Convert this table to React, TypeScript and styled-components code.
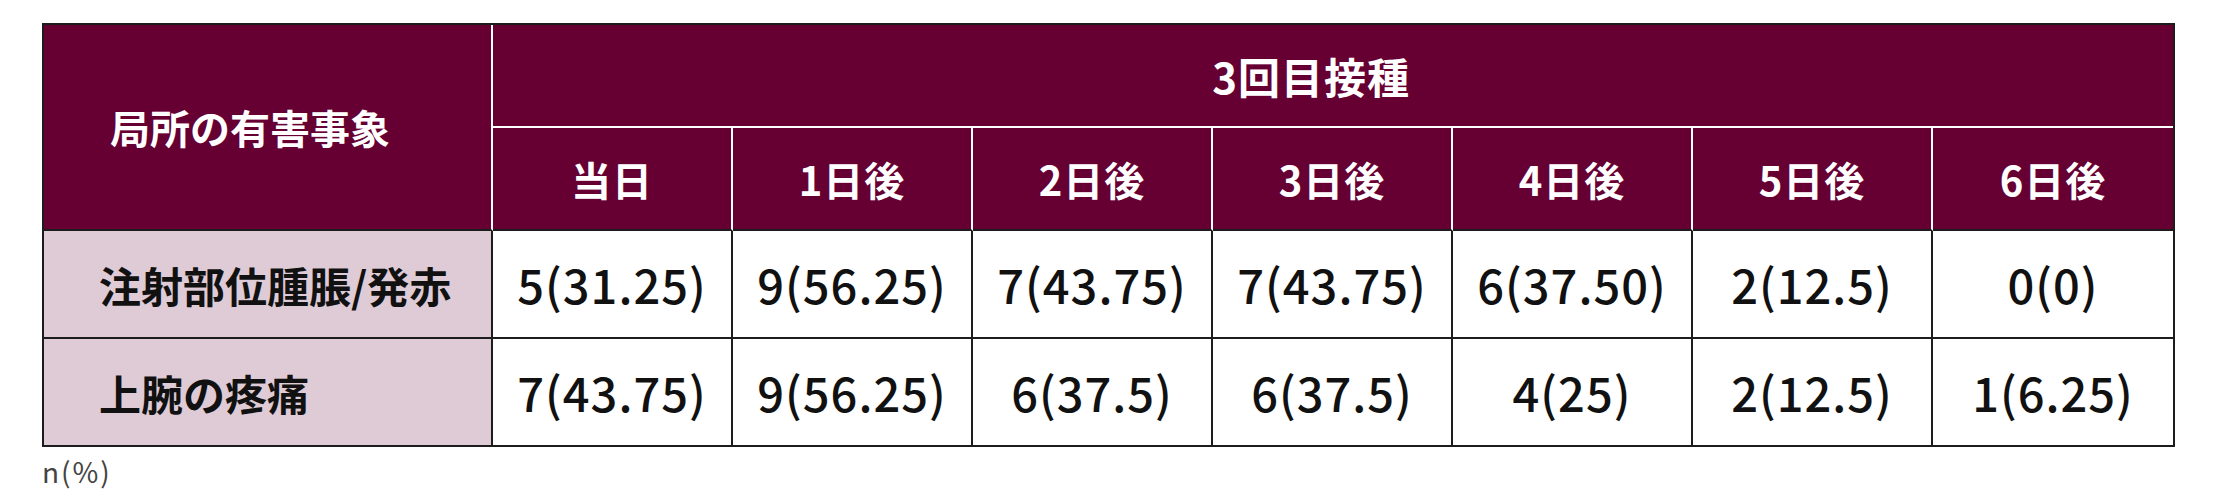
import React from 'react';
import styled, { createGlobalStyle } from 'styled-components';

const GlobalStyle = createGlobalStyle`
  body {
    margin: 0;
    background: #fff;
    font-family: "Noto Sans CJK JP", "Noto Sans", sans-serif;
  }
`;

const Page = styled.div`
  padding: 23px 0 0 42px;
`;

const Table = styled.table`
  width: 2131px;
  table-layout: fixed;
  border-collapse: separate;
  border-spacing: 0;
  border: 2px solid #1c1c1c;
`;

const HeadCell = styled.th<{ $first?: boolean; $bottom?: boolean; $size?: number }>`
  background: #660033;
  color: #fff;
  font-weight: 700;
  font-size: ${(p) => p.$size || 40}px;
  letter-spacing: ${(p) => (p.$first ? '0' : '1px')};
  height: ${(p) => (p.$first ? '204px' : '101px')};
  padding: ${(p) => (p.$first ? '0 0 0 66px' : '0')};
  text-align: ${(p) => (p.$first ? 'left' : 'center')};
  border-right: 2px solid #fff;
  border-bottom: 2px solid ${(p) => (p.$bottom ? '#1c1c1c' : '#fff')};
  &:last-child {
    border-right: none;
  }
`;

const SpanTitle = styled.span`
  display: inline-block;
  margin-right: 44px;
`;

const LabelCell = styled.td`
  background: #decbd6;
  color: #111;
  font-weight: 700;
  font-size: 42px;
  height: 104px;
  padding-left: 55px;
  border-right: 2px solid #1c1c1c;
  border-bottom: 2px solid #1c1c1c;
  tr:last-child > & {
    border-bottom: none;
  }
`;

const ValueCell = styled.td`
  background: #fff;
  color: #111;
  font-weight: 500;
  font-size: 47px;
  letter-spacing: 1px;
  text-align: center;
  padding-bottom: 2px;
  border-right: 2px solid #1c1c1c;
  border-bottom: 2px solid #1c1c1c;
  &:last-child {
    border-right: none;
  }
  tr:last-child > & {
    border-bottom: none;
  }
`;

const Note = styled.div`
  margin-top: 4px;
  font-size: 28px;
  letter-spacing: 2px;
  color: #444;
`;

const days = ['当日', '1日後', '2日後', '3日後', '4日後', '5日後', '6日後'];

const rows = [
  {
    label: '注射部位腫脹/発赤',
    values: ['5(31.25)', '9(56.25)', '7(43.75)', '7(43.75)', '6(37.50)', '2(12.5)', '0(0)'],
  },
  {
    label: '上腕の疼痛',
    values: ['7(43.75)', '9(56.25)', '6(37.5)', '6(37.5)', '4(25)', '2(12.5)', '1(6.25)'],
  },
];

const App: React.FC = () => {
  return (
    <Page>
      <GlobalStyle />
      <Table>
        <colgroup>
          <col style={{ width: 449 }} />
          {days.map((d) => (
            <col key={d} style={{ width: 240 }} />
          ))}
        </colgroup>
        <thead>
          <tr>
            <HeadCell $first $bottom rowSpan={2}>
              局所の有害事象
            </HeadCell>
            <HeadCell colSpan={7} $size={42}>
              <SpanTitle>3回目接種</SpanTitle>
            </HeadCell>
          </tr>
          <tr>
            {days.map((d) => (
              <HeadCell key={d} $bottom $size={40}>
                {d}
              </HeadCell>
            ))}
          </tr>
        </thead>
        <tbody>
          {rows.map((row) => (
            <tr key={row.label}>
              <LabelCell>{row.label}</LabelCell>
              {row.values.map((v, i) => (
                <ValueCell key={i}>{v}</ValueCell>
              ))}
            </tr>
          ))}
        </tbody>
      </Table>
      <Note>n(%)</Note>
    </Page>
  );
};

export default App;
